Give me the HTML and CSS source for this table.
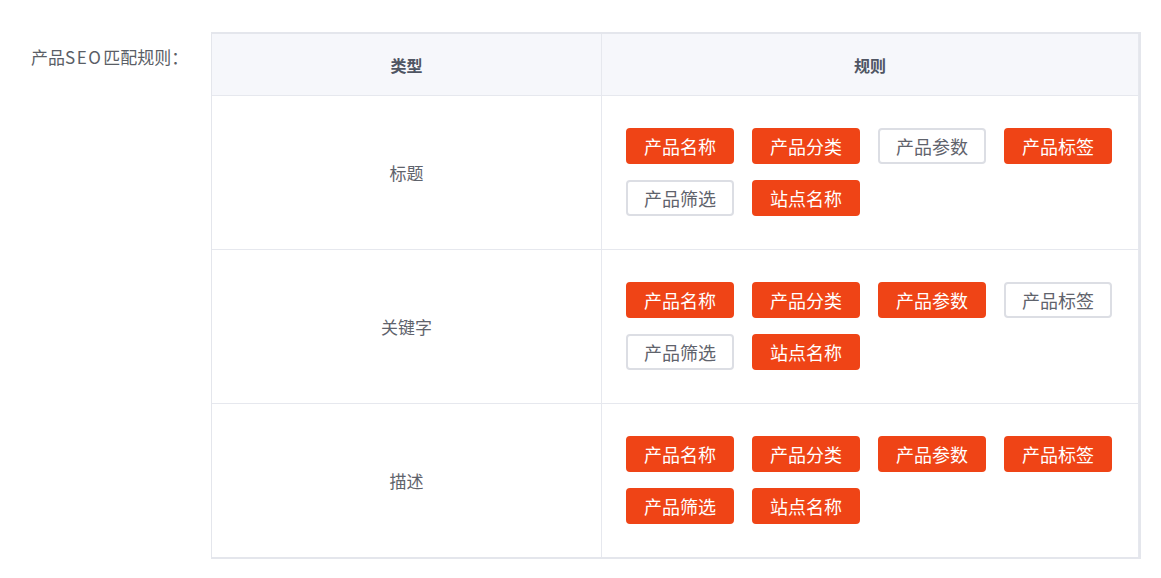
FILE: index.html
```html
<!DOCTYPE html>
<html lang="zh-CN">
<head>
<meta charset="utf-8">
<title>产品SEO匹配规则</title>
<link rel="stylesheet" href="styles.css">
</head>
<body>
<div class="form-row">
  <div class="form-label">产品<span class="latin">SEO</span>匹配规则：</div>
  <div class="rules">
    <div class="cell head">类型</div>
    <div class="cell head">规则</div>

    <div class="cell type">标题</div>
    <div class="cell tags">
      <span class="tag on">产品名称</span>
      <span class="tag on">产品分类</span>
      <span class="tag">产品参数</span>
      <span class="tag on">产品标签</span>
      <span class="tag">产品筛选</span>
      <span class="tag on">站点名称</span>
    </div>

    <div class="cell type">关键字</div>
    <div class="cell tags">
      <span class="tag on">产品名称</span>
      <span class="tag on">产品分类</span>
      <span class="tag on">产品参数</span>
      <span class="tag">产品标签</span>
      <span class="tag">产品筛选</span>
      <span class="tag on">站点名称</span>
    </div>

    <div class="cell type last">描述</div>
    <div class="cell tags last">
      <span class="tag on">产品名称</span>
      <span class="tag on">产品分类</span>
      <span class="tag on">产品参数</span>
      <span class="tag on">产品标签</span>
      <span class="tag on">产品筛选</span>
      <span class="tag on">站点名称</span>
    </div>
  </div>
</div>
</body>
</html>
```
FILE: styles.css
```css
* { box-sizing: border-box; }

body {
  margin: 0;
  background: #ffffff;
  font-family: "Noto Sans CJK SC", "Noto Sans", sans-serif;
  color: #606266;
}

.form-row {
  display: flex;
  align-items: flex-start;
  padding-top: 32px;
}

.form-label {
  width: 211px;
  padding-left: 31px;
  padding-top: 13px;
  font-size: 17px;
  line-height: 24px;
  color: #5a5e66;
  white-space: nowrap;
}

.form-label .latin {
  letter-spacing: 1.5px;
  margin-right: 1px;
}

.rules {
  display: grid;
  grid-template-columns: 390px 537px;
  border-top: 2px solid #e4e6ec;
  border-left: 1px solid #e4e6ec;
  border-right: 2px solid #e4e6ec;
  border-bottom: 2px solid #e4e6ec;
}

.cell {
  border-right: 1px solid #e6e8ee;
  border-bottom: 1px solid #e6e8ee;
}

.cell.last { border-bottom: none; }

.head {
  height: 62px;
  background: #f6f7fb;
  display: flex;
  align-items: center;
  justify-content: center;
  font-size: 16px;
  font-weight: 700;
  color: #4f5563;
}

.type {
  display: flex;
  align-items: center;
  justify-content: center;
  font-size: 17px;
  color: #5f636c;
}

.tags {
  display: flex;
  flex-wrap: wrap;
  align-content: flex-start;
  gap: 16px 18px;
  padding: 32px 24px 33px 24px;
}

.tag {
  width: 108px;
  height: 36px;
  display: flex;
  align-items: center;
  justify-content: center;
  border: 2px solid #dcdee4;
  border-radius: 4px;
  font-size: 18px;
  color: #5f636c;
  background: #ffffff;
}

.tag.on {
  background: #ef4416;
  border-color: #ef4416;
  color: #ffffff;
}
```
